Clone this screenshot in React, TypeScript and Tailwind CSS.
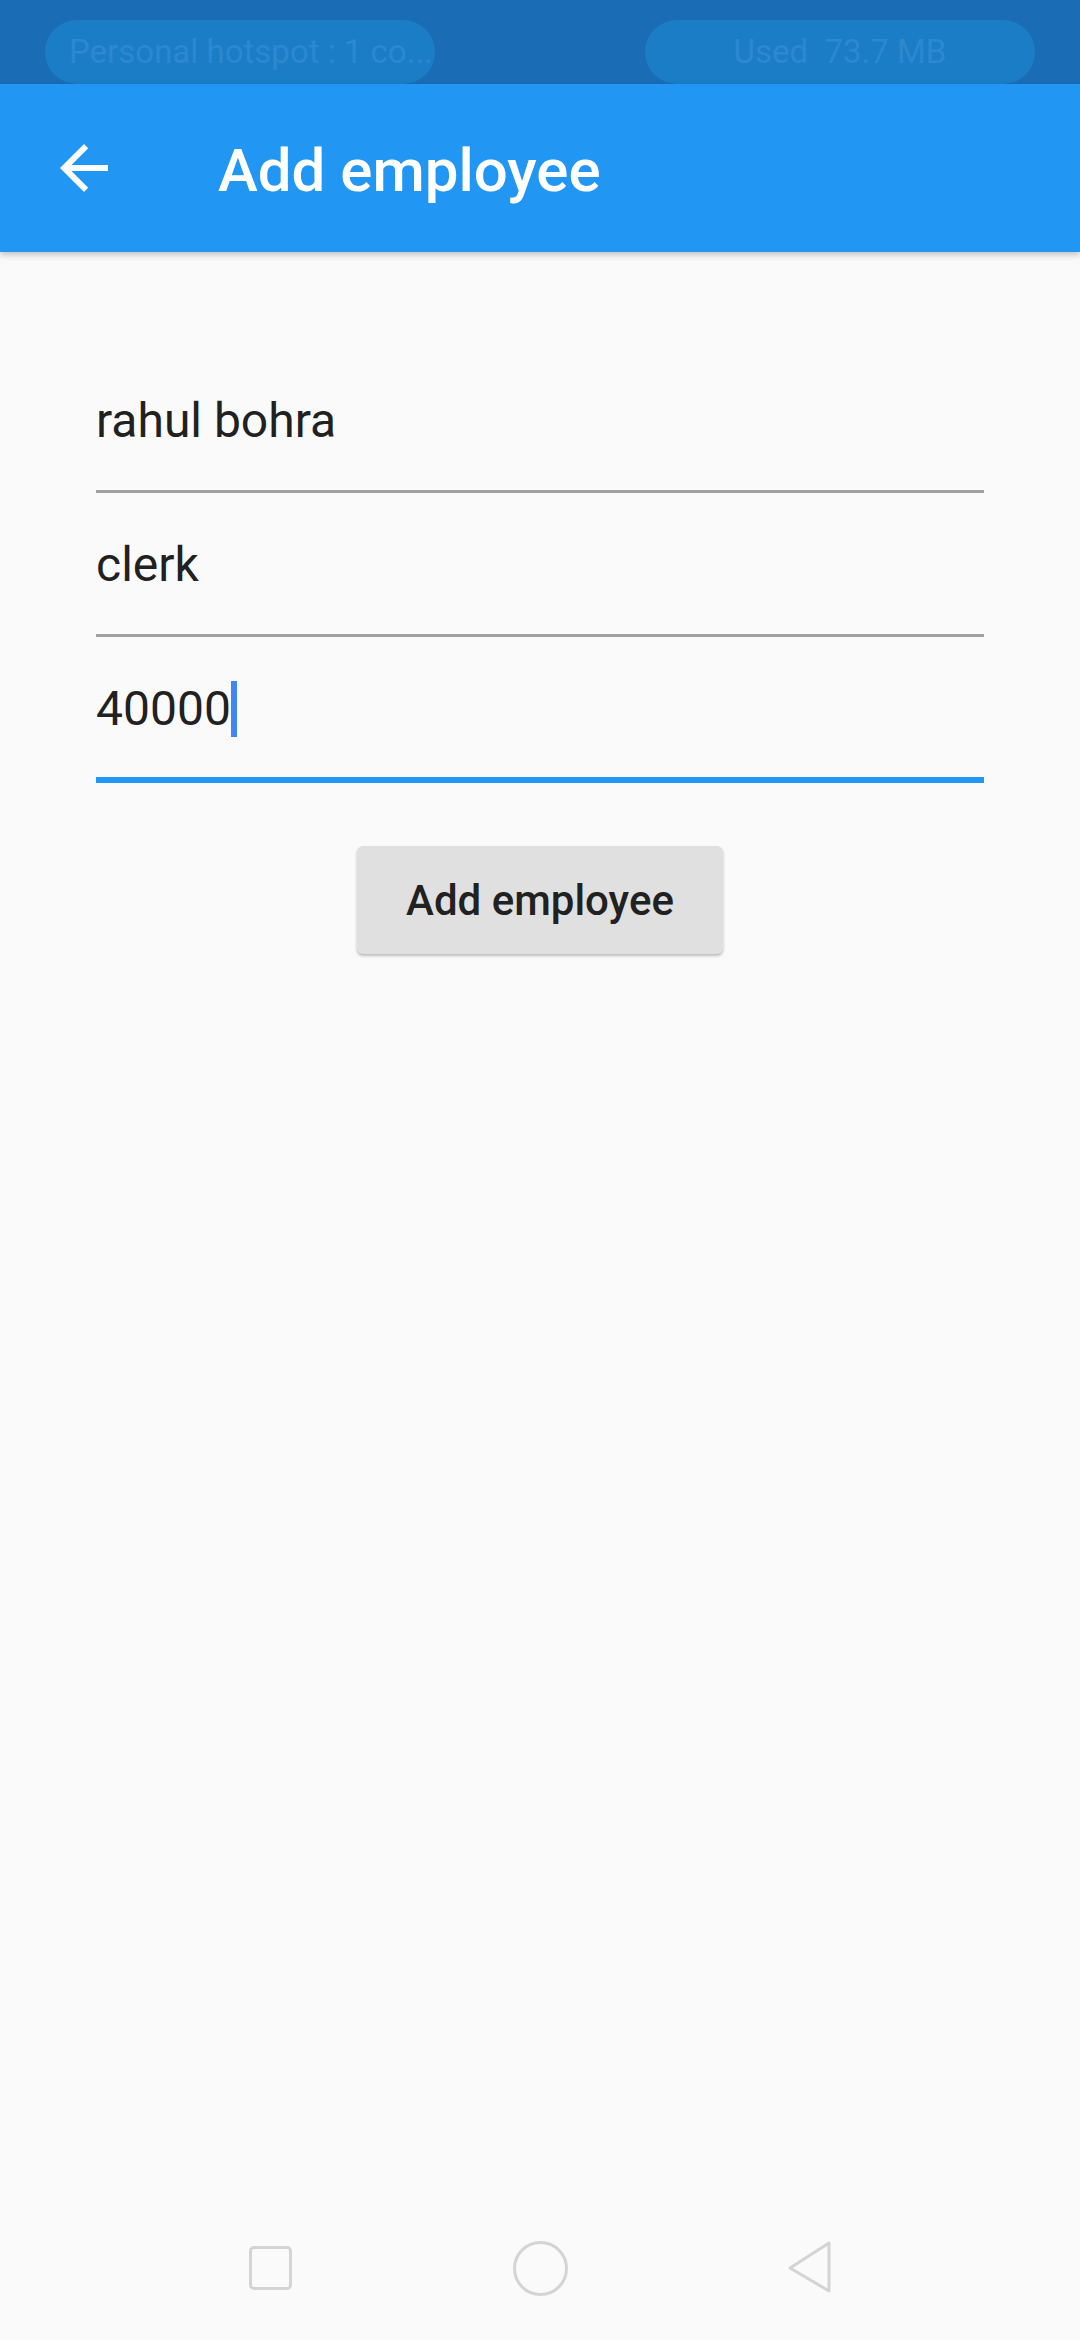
import React from "react";

function Field({ value, focused }: { value: string; focused?: boolean }) {
  return (
    <div
      className={
        focused
          ? "pt-[44px] pb-[40px] border-b-[6px] border-[#2196f3]"
          : "pt-[44px] pb-[41px] border-b-[3px] border-[#a0a0a0]"
      }
    >
      <div className="flex h-[56px] items-stretch">
        <span className="text-[48px] leading-[56px] text-[#212121]">{value}</span>
        {focused && <span className="w-[6px] bg-[#4285f4]" />}
      </div>
    </div>
  );
}

export default function App() {
  return (
    <div className="w-[1080px] h-[2340px] bg-[#fafafa] flex flex-col font-['Roboto',sans-serif] overflow-hidden">
      {/* Status bar */}
      <div className="h-[84px] bg-[#1a6db5] flex justify-between px-[45px] pt-[20px] overflow-hidden shrink-0">
        <div className="w-[390px] h-[64px] rounded-full bg-[#1b7dc6] flex items-center pl-[24px] pr-[6px]">
          <span className="text-[33px] text-[#2c88cf] whitespace-nowrap">Personal hotspot : 1 co...</span>
        </div>
        <div className="w-[390px] h-[64px] rounded-full bg-[#1b7dc6] flex items-center justify-center">
          <span className="text-[33px] text-[#2c88cf] whitespace-pre">Used  73.7 MB</span>
        </div>
      </div>

      {/* App bar */}
      <div className="relative z-10 h-[168px] bg-[#2196f3] flex items-center shrink-0 shadow-[0_3px_6px_rgba(0,0,0,0.22)]">
        <div className="w-[72px] h-[72px] ml-[48px]">
          <svg viewBox="0 0 24 24" width="72" height="72" fill="#ffffff">
            <path d="M20 11H7.83l5.59-5.59L12 4l-8 8 8 8 1.41-1.41L7.83 13H20v-2z" />
          </svg>
        </div>
        <span className="ml-[98px] mt-[6px] text-[60px] font-medium text-white leading-none">Add employee</span>
      </div>

      {/* Body */}
      <div className="flex flex-col px-[96px] pt-[97px]">
        <Field value="rahul bohra" />
        <Field value="clerk" />
        <Field value="40000" focused />
        <div className="flex justify-center mt-[63px]">
          <button className="w-[366px] h-[108px] rounded-[6px] bg-[#e0e0e0] text-[42px] font-medium text-[#212121] shadow-[0_2px_3px_rgba(0,0,0,0.25)]">
            Add employee
          </button>
        </div>
      </div>

      {/* Navigation bar */}
      <div className="mt-auto h-[144px] flex justify-center items-center shrink-0">
        <div className="w-[270px] flex justify-center">
          <div className="w-[43px] h-[44px] rounded-[5px] border-[3px] border-[#d4d4d4]" />
        </div>
        <div className="w-[270px] flex justify-center">
          <div className="w-[55px] h-[55px] rounded-full border-[3px] border-[#d4d4d4]" />
        </div>
        <div className="w-[270px] flex justify-center">
          <svg width="48" height="56" viewBox="0 0 48 56">
            <path
              d="M43 3 L43 51 L4 28 Z"
              fill="none"
              stroke="#d4d4d4"
              strokeWidth="3"
              strokeLinejoin="round"
            />
          </svg>
        </div>
      </div>
    </div>
  );
}
